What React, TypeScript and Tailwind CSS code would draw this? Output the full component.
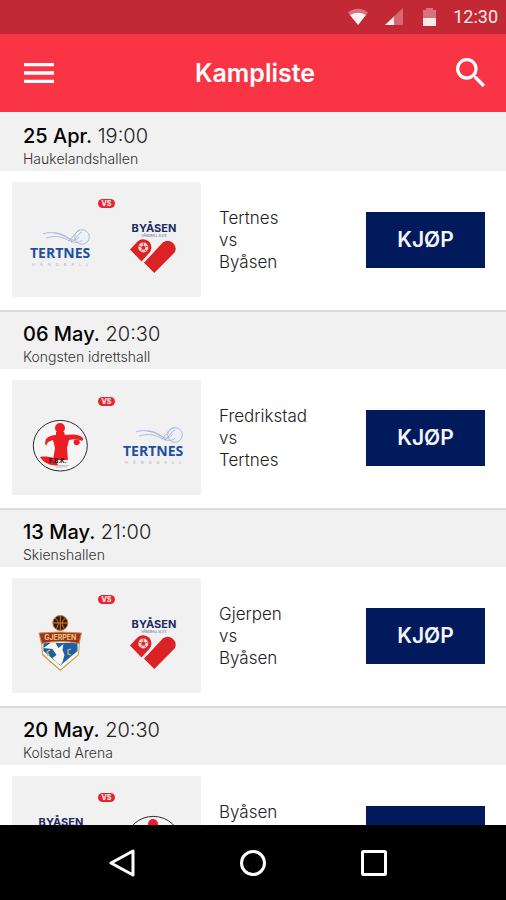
import { MdMenu, MdSearch } from 'react-icons/md'

type Team = 'Tertnes' | 'Byåsen' | 'Fredrikstad' | 'Gjerpen'

interface Match {
  date: string
  time: string
  venue: string
  home: Team
  away: Team
}

const matches: Match[] = [
  { date: '25 Apr.', time: '19:00', venue: 'Haukelandshallen', home: 'Tertnes', away: 'Byåsen' },
  { date: '06 May.', time: '20:30', venue: 'Kongsten idrettshall', home: 'Fredrikstad', away: 'Tertnes' },
  { date: '13 May.', time: '21:00', venue: 'Skienshallen', home: 'Gjerpen', away: 'Byåsen' },
  { date: '20 May.', time: '20:30', venue: 'Kolstad Arena', home: 'Byåsen', away: 'Fredrikstad' },
]

function TertnesLogo() {
  return (
    <svg viewBox="0 0 64 64" className="size-16 overflow-visible" role="img" aria-label="Tertnes">
      <g fill="none" stroke="#9dadd7" strokeWidth="0.8">
        <circle cx="54" cy="21" r="7.3" fill="#eef1f8" />
        <path d="M15 18c10-4 19 1 27 5 4 2 7 1 9-2" />
        <path d="M18 22c10-3 17-1 24 3 5 2 9 2 12-1" />
        <path d="M26 17c9 0 13 4 18 8M40 25c5-2 6-9 12-11M43 26c5-1 6-8 11-10" />
      </g>
      <text x="2" y="42" fontSize="14" fontWeight="700" fill="#1d50a2" className="font-['Open_Sans',sans-serif]">
        TERTNES
      </text>
      <text x="4" y="50" fontSize="4" fill="#a5afc2" className="font-[Inter,sans-serif] tracking-[5px]">
        HÅNDBALL
      </text>
    </svg>
  )
}

function ByasenLogo() {
  return (
    <svg viewBox="0 0 64 64" className="size-16 overflow-visible" role="img" aria-label="Byåsen">
      <text x="33" y="16" fontSize="11" fontWeight="700" textAnchor="middle" fill="#1b2a63" className="font-[Inter,sans-serif]">
        BYÅSEN
      </text>
      <text x="33" y="21" fontSize="3" textAnchor="middle" fill="#3d6387" className="font-[Inter,sans-serif]">
        HÅNDBALL ELITE
      </text>
      <path d="M9 33.5l7.5-8a8.2 8.2 0 0 1 11.5 11.7l-7.5 8.3z" fill="#db2326" />
      <path d="M23 46.7l19-20.4a8 8 0 0 1 11.8 10L33.3 57z" fill="#db2326" />
      <circle cx="22.3" cy="31.5" r="5" fill="#f6d5d3" />
      <path d="M22.3 29.3l2.2 1.6-.8 2.6h-2.8l-.8-2.6z" fill="#db2326" />
      <path
        d="M22.3 29.3v-2.6M24.5 30.9l2.5-.9M23.7 33.5l1.5 2M20.9 33.5l-1.5 2M20.1 30.9l-2.5-.9"
        stroke="#db2326"
        strokeWidth="0.8"
      />
    </svg>
  )
}

function FredrikstadLogo() {
  return (
    <svg viewBox="0 0 64 64" className="size-16" role="img" aria-label="Fredrikstad">
      <ellipse cx="32.3" cy="31.7" rx="27" ry="25.3" fill="#f5f5f5" stroke="#2b2b2b" strokeWidth="1" />
      <g fill="#ee1c25">
        <circle cx="32" cy="14" r="5" />
        <path d="M28 18h8l1 3c8-1 15-1 18.5 4l-1.5 2c-4-2-8-2-13-1l-2 8 1 12H25l2-12-2-8-5 2-2 4-1-3 1-4c3-3 6-4 10-4z" />
        <circle cx="48.7" cy="28.3" r="3" />
        <path d="M12 43c5-1 9 0 15 1l3 7c-8 1-14-2-18-8z" />
      </g>
      <text x="21" y="49" fontSize="6" fontWeight="700" fill="#111" className="font-[Inter,sans-serif]">
        F.B.K.
      </text>
      <path d="M26 51.5h15M28 53h11" stroke="#8c8c8c" strokeWidth="0.5" />
    </svg>
  )
}

function GjerpenLogo() {
  return (
    <svg viewBox="0 0 64 64" className="size-16" role="img" aria-label="Gjerpen">
      <path d="M13 28h39l-1 15-18.7 16L14 43z" fill="#c99a45" />
      <path d="M14 29h37l-1 13.5-17.7 15L15 42z" fill="#f9f6ef" />
      <path d="M15.5 31h34v8L32.3 53.5 15.5 39z" fill="#1d5fa8" />
      <path d="M15.5 36l7-5h5l3 5 5-4-1 6 2 5-2 7-2 3-3-2-5-5 4-3-4-6z" fill="#f9f6ef" />
      <path d="M22 38l-3 2 2 3-2 1M43 37l-3 1v4l3 1" fill="none" stroke="#e0bd6c" strokeWidth="1.2" />
      <path d="M11 21q21-2 42.5 0L51 31.5q-18.7-4-37.5 0z" fill="#a03222" stroke="#c99a45" strokeWidth="1" />
      <text x="32.3" y="28" fontSize="7" fontWeight="700" textAnchor="middle" fill="#ecc77f" className="font-[Inter,sans-serif]">
        GJERPEN
      </text>
      <circle cx="32.3" cy="11" r="7.5" fill="#3a1a10" stroke="#b5812f" strokeWidth="1" />
      <path
        d="M32.3 4v14M25 11h14.5M27 6c4 3 4 7 1 11M37.5 6c-4 3-4 7-1 11"
        fill="none"
        stroke="#c9812b"
        strokeWidth="1"
      />
    </svg>
  )
}

const logos = {
  Tertnes: TertnesLogo,
  Byåsen: ByasenLogo,
  Fredrikstad: FredrikstadLogo,
  Gjerpen: GjerpenLogo,
}

function StatusBar() {
  return (
    <div className="flex h-[34px] shrink-0 items-center justify-end bg-[#c32934] pr-2 text-[#fbe9ea]">
      <svg viewBox="0 0 20 18" className="mr-[17px] h-[18px] w-5" aria-hidden="true">
        <path d="M10 17L0 4.5Q10-3 20 4.5z" fill="#fff" fillOpacity="0.35" />
        <path d="M10 17L2 7q8-4.5 16 0z" fill="#fff" fillOpacity="0.9" />
      </svg>
      <svg viewBox="0 0 18 18" className="mr-5 size-[18px]" aria-hidden="true">
        <path d="M18 0v17H0z" fill="#fff" fillOpacity="0.3" />
        <path d="M9 8.5V17H0z" fill="#fff" fillOpacity="0.9" />
      </svg>
      <svg viewBox="0 0 13 18" className="mr-[17px] h-[18px] w-[13px]" aria-hidden="true">
        <path d="M0 10V2h3V0h7v2h3v8z" fill="#fff" fillOpacity="0.35" />
        <path d="M0 10h13v8H0z" fill="#fff" fillOpacity="0.9" />
      </svg>
      <span className="font-[Roboto,sans-serif] text-[18px] leading-6">12:30</span>
    </div>
  )
}

function MatchCard({ match }: { match: Match }) {
  const HomeLogo = logos[match.home]
  const AwayLogo = logos[match.away]

  return (
    <li className="border-t-2 border-[#dcdcdc] first:border-[#f1f1f1]">
      {/* Date and venue */}
      <div className="bg-[#f1f1f1] pt-2 pb-[3px] pl-[23px]">
        <h2 className="text-[20px] leading-7 font-light text-[#222]">
          <span className="font-medium text-black">{match.date}</span> {match.time}
        </h2>
        <p className="text-[14px] leading-[18px] font-light text-[#333]">{match.venue}</p>
      </div>

      {/* Teams and ticket button */}
      <div className="flex items-center bg-white pt-[11px] pr-[21px] pb-[13px] pl-3">
        <div className="flex h-[115px] w-[189px] shrink-0 flex-col items-center rounded-xs bg-[#f1f1f1] pt-[17px]">
          <span className="flex h-[9px] w-[17px] items-center justify-center rounded-full bg-[#ea2330] text-[7px] leading-none font-bold text-white">
            VS
          </span>
          <div className="mt-2 flex gap-[29px]">
            <HomeLogo />
            <AwayLogo />
          </div>
        </div>
        <p className="ml-[18px] flex-1 text-[17px] leading-[22px] font-light text-[#222]">
          {match.home}
          <br />
          vs
          <br />
          {match.away}
        </p>
        <button type="button" className="h-14 w-[119px] bg-[#001a5c] text-[21px] font-semibold text-[#f3f4fa]">
          KJØP
        </button>
      </div>
    </li>
  )
}

function NavBar() {
  return (
    <nav className="grid h-[75px] shrink-0 grid-cols-[1fr_auto_1fr] items-center bg-black">
      <button type="button" aria-label="Back" className="mr-[103px] justify-self-end">
        <svg viewBox="0 0 28 28" className="size-7" fill="none" stroke="#fff" strokeWidth="3" strokeLinejoin="round">
          <path d="M25 2v24L3 14z" />
        </svg>
      </button>
      <button type="button" aria-label="Home">
        <svg viewBox="0 0 28 28" className="size-7" fill="none" stroke="#fff" strokeWidth="3">
          <circle cx="14" cy="14" r="11.5" />
        </svg>
      </button>
      <button type="button" aria-label="Recent apps" className="ml-[93px] justify-self-start">
        <svg viewBox="0 0 28 28" className="size-7" fill="none" stroke="#fff" strokeWidth="3">
          <rect x="2.5" y="2.5" width="23" height="23" rx="1" />
        </svg>
      </button>
    </nav>
  )
}

export default function App() {
  return (
    <div className="flex h-screen flex-col bg-white font-[Inter,sans-serif]">
      <StatusBar />
      <header className="flex h-[78px] shrink-0 items-center justify-between bg-[#f83445] pr-[15px] pl-[19px] text-white">
        <button type="button" aria-label="Menu">
          <MdMenu size={40} />
        </button>
        <h1 className="text-[25px] leading-8 font-semibold">Kampliste</h1>
        <button type="button" aria-label="Search">
          <MdSearch size={40} />
        </button>
      </header>
      <main className="min-h-0 flex-1 overflow-hidden">
        <ul>
          {matches.map((match) => (
            <MatchCard key={match.date} match={match} />
          ))}
        </ul>
      </main>
      <NavBar />
    </div>
  )
}
